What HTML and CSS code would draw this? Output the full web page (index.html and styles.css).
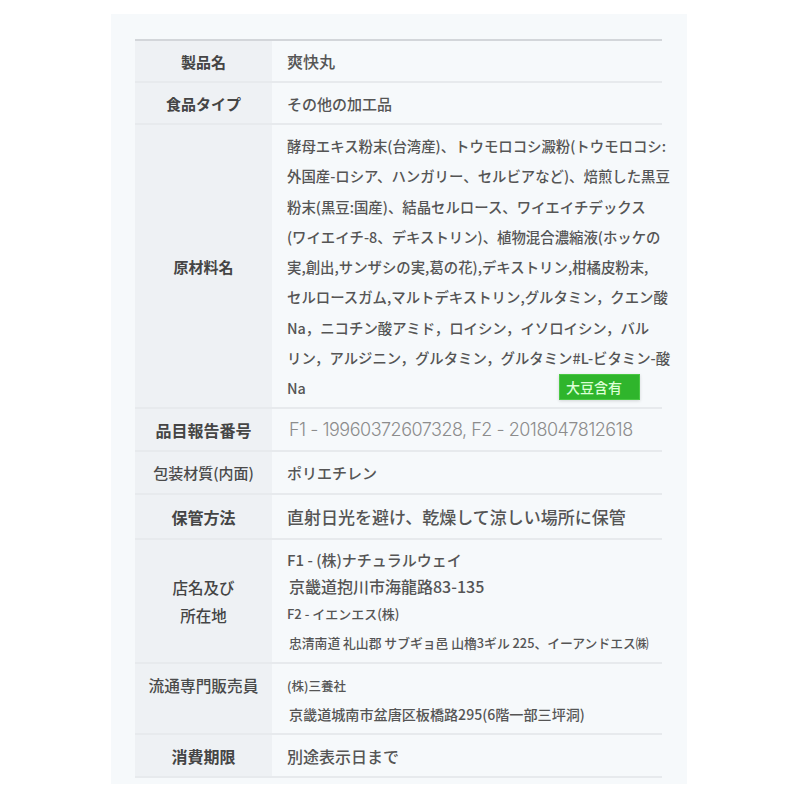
FILE: index.html
```html
<!DOCTYPE html>
<html lang="ja">
<head>
<meta charset="utf-8">
<link rel="stylesheet" href="styles.css">
</head>
<body>
<div class="panel">
  <div class="table">
    <div class="row r1">
      <div class="label">製品名</div>
      <div class="value v16">爽快丸</div>
    </div>
    <div class="row r2">
      <div class="label">食品タイプ</div>
      <div class="value v15">その他の加工品</div>
    </div>
    <div class="row r3">
      <div class="label">原材料名</div>
      <div class="value ingredients">
        <span>酵母エキス粉末(台湾産)、トウモロコシ澱粉(トウモロコシ:</span>
        <span>外国産-ロシア、ハンガリー、セルビアなど)、焙煎した黒豆</span>
        <span>粉末(黒豆:国産)、結晶セルロース、ワイエイチデックス</span>
        <span>(ワイエイチ-8、デキストリン)、植物混合濃縮液(ホッケの</span>
        <span>実,創出,サンザシの実,葛の花),デキストリン,柑橘皮粉末,</span>
        <span>セルロースガム,マルトデキストリン,グルタミン，クエン酸</span>
        <span>Na，ニコチン酸アミド，ロイシン，イソロイシン，バル</span>
        <span>リン，アルジニン，グルタミン，グルタミン#L-ビタミン-酸</span>
        <span>Na</span>
        <div class="badge">大豆含有</div>
      </div>
    </div>
    <div class="row r4">
      <div class="label l16">品目報告番号</div>
      <div class="value report">F1 - 19960372607328, F2 - 2018047812618</div>
    </div>
    <div class="row r5">
      <div class="label l15n">包装材質(内面)</div>
      <div class="value v15">ポリエチレン</div>
    </div>
    <div class="row r6">
      <div class="label l16">保管方法</div>
      <div class="value v17">直射日光を避け、乾燥して涼しい場所に保管</div>
    </div>
    <div class="row r7">
      <div class="label stack"><span>店名及び</span><span>所在地</span></div>
      <div class="value addr">
        <span class="a1">F1 - (株)ナチュラルウェイ</span>
        <span class="a2">京畿道抱川市海龍路83-135</span>
        <span class="a3">F2 - イエンエス(株)</span>
        <span class="a4">忠清南道 礼山郡 サブギョ邑 山櫓3ギル 225、イーアンドエス㈱</span>
      </div>
    </div>
    <div class="row r8">
      <div class="label top l16n">流通専門販売員</div>
      <div class="value dist">
        <span class="d1">(株)三養社</span>
        <span class="d2">京畿道城南市盆唐区板橋路295(6階一部三坪洞)</span>
      </div>
    </div>
    <div class="row r9">
      <div class="label l16">消費期限</div>
      <div class="value v16">別途表示日まで</div>
    </div>
  </div>
</div>
</body>
</html>
```

FILE: styles.css
```css
html, body {
  margin: 0;
  padding: 0;
  background: #ffffff;
}

body {
  font-family: "Noto Sans CJK JP", "Noto Sans", sans-serif;
  color: #555;
}

.panel {
  margin: 14px 0 0 111px;
  width: 576px;
  box-sizing: border-box;
  padding: 25px 25px 6px 24px;
  background: #f6f9fb;
}

.table {
  border-top: 2px solid #d3d6da;
}

.row {
  display: grid;
  grid-template-columns: 137px 1fr;
  box-sizing: border-box;
  border-bottom: 2px solid #e7eaed;
}

.r1 { height: 42px; }
.r2 { height: 42px; }
.r3 { height: 284px; }
.r4 { height: 43px; }
.r5 { height: 43px; }
.r6 { height: 45px; }
.r7 { height: 124px; }
.r8 { height: 71px; }
.r9 { height: 43px; }

.label {
  background: #eef1f4;
  display: flex;
  align-items: center;
  justify-content: center;
  font-size: 15px;
  font-weight: 700;
  color: #454545;
}

.l16 { font-size: 16px; }
.l15n { font-size: 15px; font-weight: 500; color: #4a4a4a; }
.l16n { font-size: 15.7px; font-weight: 500; color: #4a4a4a; }

.label.stack {
  flex-direction: column;
  line-height: 28px;
  font-size: 15.5px;
  font-weight: 500;
}

.label.top {
  align-items: flex-start;
  padding-top: 9px;
  line-height: 26px;
}

.value {
  display: flex;
  align-items: center;
  padding-left: 15px;
  font-weight: 500;
  color: #555;
  white-space: nowrap;
}

.v15 { font-size: 15px; }
.v16 { font-size: 16px; }
.v17 { font-size: 17px; }

.ingredients {
  position: relative;
  flex-direction: column;
  align-items: flex-start;
  justify-content: flex-start;
  padding-top: 6px;
  font-size: 14.4px;
  line-height: 30.3px;
}

.badge {
  position: absolute;
  left: 287px;
  top: 249px;
  width: 81px;
  height: 26px;
  box-sizing: border-box;
  background: #2fb52c;
  border: 1px solid #49c844;
  color: #dcffd6;
  font-size: 14px;
  line-height: 24px;
  padding-left: 6px;
  box-shadow: 0 1px 3px rgba(0, 0, 0, 0.15);
}

.report {
  font-family: "Inter", "Liberation Sans", sans-serif;
  font-weight: 300;
  font-size: 18px;
  color: #8c8c8c;
  letter-spacing: -0.5px;
  padding-left: 17px;
}

.addr {
  flex-direction: column;
  align-items: flex-start;
  justify-content: flex-start;
  padding-top: 6px;
}

.addr span { display: block; }
.a1 { font-size: 15px; line-height: 27px; }
.a2 { font-size: 16px; line-height: 27px; padding-left: 2px; }
.a3 { font-size: 13px; line-height: 27px; }
.a4 { font-size: 12.8px; line-height: 31px; padding-left: 2px; }

.dist {
  flex-direction: column;
  align-items: flex-start;
  justify-content: flex-start;
  padding-top: 9px;
}

.dist span { display: block; }
.d1 { font-size: 12.5px; line-height: 26px; }
.d2 { font-size: 14.1px; line-height: 30px; padding-left: 2px; }
```
